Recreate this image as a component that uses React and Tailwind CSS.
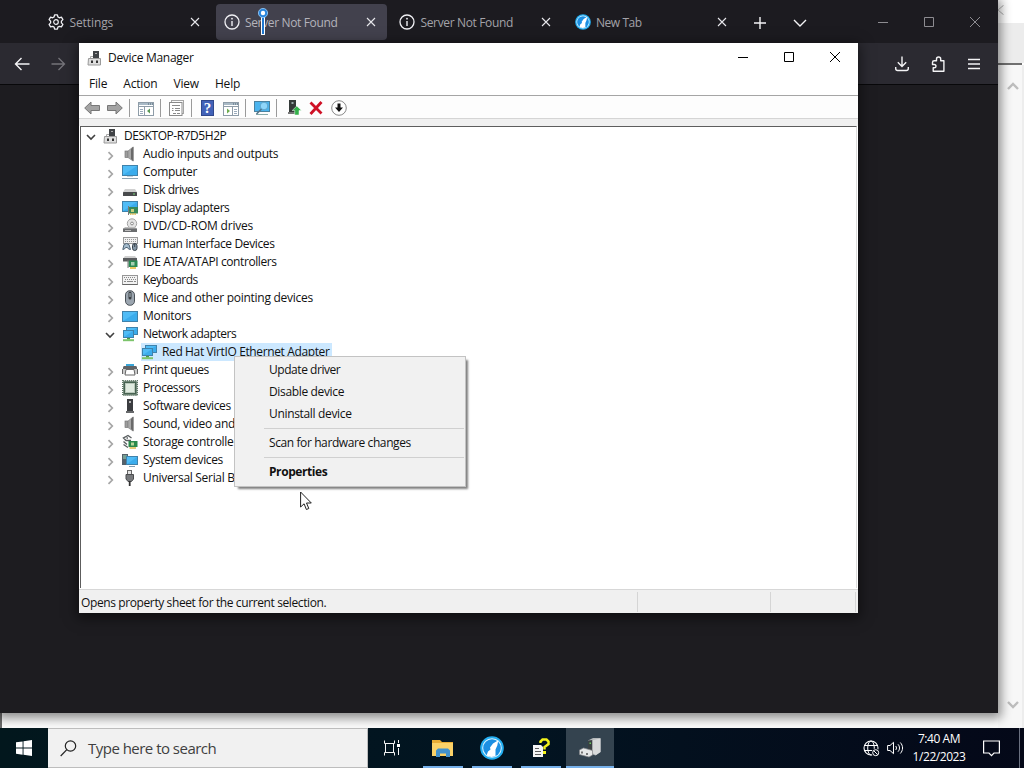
import React from "react";

const Svg = ({ w = 16, h = 16, vb, className = "", children }) => (
  <svg width={w} height={h} viewBox={vb || `0 0 ${w} ${h}`} fill="none" className={`shrink-0 ${className}`}>
    {children}
  </svg>
);

/* ---------- shared glyphs ---------- */
const Close = ({ className = "" }) => (
  <Svg w={10} h={10} className={className}>
    <path d="M1 1L9 9M9 1L1 9" stroke="currentColor" strokeWidth="1.1" />
  </Svg>
);
const Info = () => (
  <Svg w={16} h={16}>
    <circle cx="8" cy="8" r="7" stroke="#f0f0f4" strokeWidth="1.3" />
    <path d="M8 7V12" stroke="#f0f0f4" strokeWidth="1.4" />
    <circle cx="8" cy="4.7" r=".9" fill="#f0f0f4" />
  </Svg>
);
const Gear = () => (
  <Svg w={16} h={16}>
    <path
      d="M6.6 .9h2.8l.5 2 1.5.9 2-.7 1.5 2.5-1.5 1.5v1.8l1.5 1.5-1.5 2.5-2-.6-1.5.8-.5 2H6.6l-.5-2-1.5-.8-2 .6-1.5-2.5 1.5-1.5V7.1L1.1 5.6l1.5-2.5 2 .7 1.5-.9z"
      stroke="#f0f0f4"
      strokeWidth="1.3"
      strokeLinejoin="round"
    />
    <circle cx="8" cy="8" r="2.3" stroke="#f0f0f4" strokeWidth="1.2" />
  </Svg>
);
const Wolf = ({ size = 16 }) => (
  <Svg w={size} h={size} vb="0 0 24 24">
    <circle cx="12" cy="12" r="11.8" fill="#22aef2" />
    <circle cx="12" cy="12" r="9.8" fill="#d9f3ff" />
    <circle cx="12" cy="12" r="8.8" fill="#1c8fe2" />
    <path d="M18.300 4.300L17.300 9.500 15.500 13.500 15.500 20 11.500 21 6.500 19.500 8 15.500 10.500 13.500 10 11.500 13 7.500z" fill="#fff" />
  </Svg>
);

/* ---------- device icons ---------- */
const Screen = ({ x = 0, y = 2, w = 16, h = 10 }) => (
  <>
    <rect x={x + 0.5} y={y + 0.5} width={w - 1} height={h - 1} fill="#50bcf6" stroke="#3f82ab" />
    <path d={`M${x + 1} ${y + h - 1}L${x + w - 1} ${y + 1}V${y + h - 1}z`} fill="#2a9ee4" opacity=".55" />
  </>
);
const PcIcon = () => (
  <Svg>
    <rect x="6" y="1" width="6" height="8" fill="#404346" />
    <rect x="8" y="3" width="2" height="1" fill="#aaa" />
    <path d="M3.500 9V6.500h2.500" stroke="#aaa" />
    <path d="M1.500 8.500h12V15H1z" fill="#dedede" stroke="#9a9a9a" />
    <rect x="4" y="10.500" width="2" height="2.500" fill="#333" />
    <rect x="9" y="10.500" width="2" height="2.500" fill="#333" />
  </Svg>
);
const Speaker = () => (
  <Svg>
    <rect x="3" y="5" width="3" height="6.5" fill="#9d9d9d" stroke="#777" strokeWidth=".7" />
    <path d="M6 5L11 1V15L6 11.500z" fill="#a8a8a8" stroke="#888" strokeWidth=".7" />
    <path d="M9 3L11.500 .5V15.500L9 13z" fill="#6a6a6a" />
  </Svg>
);
const Computer = () => (
  <Svg>
    <Screen y={1} h={11} />
    <path d="M0 14.500H16" stroke="#8ea4b3" />
    <path d="M5 12.500H11" stroke="#c4d3dc" />
  </Svg>
);
const Disk = () => (
  <Svg>
    <path d="M3 7h10l2 3H1z" fill="#d0d0d0" />
    <rect x="1" y="10" width="14" height="4" rx=".5" fill="#484a4c" />
    <rect x="11" y="11.5" width="2" height="1" fill="#7bd67b" />
  </Svg>
);
const Display = () => (
  <Svg>
    <Screen y={1} h={11} />
    <rect x="7" y="7" width="9" height="6.5" fill="#38895a" />
    <rect x="9" y="9" width="3" height="3" fill="#c7cf7d" />
    <path d="M8 14H14" stroke="#d4b13c" strokeWidth="1.4" strokeDasharray="1.5 .7" />
    <path d="M6.500 6V15" stroke="#7a7a7a" />
  </Svg>
);
const Dvd = () => (
  <Svg>
    <circle cx="10" cy="5.5" r="4.7" fill="#e4e4e4" stroke="#a3a3a3" />
    <circle cx="10" cy="5.5" r="1.4" fill="#fff" stroke="#8b8b8b" />
    <path d="M3 9h10l2 2H1z" fill="#bcbcbc" />
    <rect x="1" y="10.5" width="14" height="3.5" fill="#6a6c6e" />
    <rect x="3" y="12" width="6" height="1" fill="#bbb" />
  </Svg>
);
const Hid = () => (
  <Svg>
    <rect x="1.5" y="1.5" width="14" height="6" fill="#f0f0f0" stroke="#9a9a9a" />
    <path d="M3 3.500H15M3 5.500H15" stroke="#999" strokeDasharray="1 1" />
    <path d="M.8 13.500L2 8.500 4.500 7.500 7 8.500 8.500 13.500 6.500 13 5.500 11.500H3.500L2.500 13z" stroke="#4d6274" fill="#a5bccd" />
    <rect x="10.5" y="7.5" width="4.5" height="7" rx="2.2" fill="#8496a5" stroke="#39434c" />
    <path d="M12.700 7.500V11" stroke="#39434c" />
  </Svg>
);
const Ide = () => (
  <Svg>
    <path d="M3 2h10l2 2.500H1z" fill="#cfcfcf" />
    <rect x="1" y="4" width="14" height="3.5" fill="#5a5c5e" />
    <rect x="6.5" y="6.5" width="9" height="6.5" fill="#2b8a55" />
    <rect x="9" y="8" width="3.5" height="3.5" fill="#a6d0b2" />
    <path d="M8 14H14" stroke="#e1b93a" strokeWidth="1.6" />
    <path d="M6 6V14" stroke="#777" />
  </Svg>
);
const Keyboard = () => (
  <Svg>
    <rect x=".5" y="3.5" width="15" height="9" fill="#f2f2f2" stroke="#979797" />
    <path d="M2 5.500H14M3 7.500H14" stroke="#888" strokeDasharray="1 1" />
    <path d="M2 9.500H4M5 9.500H11M12 9.500H14" stroke="#888" />
    <path d="M.5 12.500H15.500" stroke="#666" />
  </Svg>
);
const Mouse = () => (
  <Svg>
    <rect x="3.5" y=".7" width="9" height="14.6" rx="4.2" fill="#9ba5af" stroke="#4a5157" />
    <rect x="6.5" y="1.5" width="3" height="8" rx="1.5" fill="#383e43" />
    <rect x="7.5" y="3" width="1" height="4" fill="#b5c3cd" />
  </Svg>
);
const Monitor = () => (
  <Svg>
    <Screen y={3} h={11} />
  </Svg>
);
const Network = () => (
  <Svg>
    <Screen x={4} y={1} w={12} h={8} />
    <Screen x={1} y={4} w={11} h={8} />
    <path d="M6.500 12V13.500" stroke="#4a9c44" strokeWidth="3" />
    <path d="M1 14.200H12" stroke="#7cc46b" strokeWidth="2" />
  </Svg>
);
const Printer = () => (
  <Svg>
    <rect x="4" y="2" width="8" height="3" fill="#3aa6d8" />
    <path d="M1 5.500C1 4 2 4 3 4h10c1 0 2 0 2 1.500V8H1z" fill="#606366" />
    <rect x="0" y="7" width="16" height="5" fill="#cacaca" />
    <path d="M4 7.500H12L13 13H3z" fill="#fff" stroke="#666" />
    <path d="M.5 7V12M15.500 7V12" stroke="#666" />
  </Svg>
);
const Cpu = () => (
  <Svg>
    <rect x=".7" y=".7" width="14.6" height="14.6" stroke="#5f7866" strokeWidth="1.4" strokeDasharray="1.2 .8" />
    <rect x="1.3" y="1.3" width="13.4" height="13.4" fill="#476351" />
    <rect x="3.5" y="3.5" width="9" height="9" fill="#e0ebe0" stroke="#b9c8bb" />
  </Svg>
);
const Software = () => (
  <Svg>
    <rect x="5" y="1" width="6" height="13" fill="#3b3d40" />
    <rect x="7" y="3" width="2" height="2" fill="#b5b5b5" />
    <rect x="4" y="13" width="8" height="2" fill="#67696b" />
  </Svg>
);
const Storage = () => (
  <Svg>
    <path d="M9.500 4L6 1.500 1.500 4 4 6.500H9M1.500 7.500L5 10.500M1.500 10.500L6 13.500M6 4H4.500" stroke="#5a5f61" strokeWidth="1.400" />
    <rect x="6.5" y="7" width="9" height="6" fill="#2b8a4c" />
    <rect x="9" y="8.5" width="3" height="3" fill="#b8d69a" />
    <path d="M7.500 14H14" stroke="#d7b33c" strokeWidth="1.400" />
  </Svg>
);
const System = () => (
  <Svg>
    <path d="M0 2h6v11H0z" fill="#54616b" />
    <path d="M1 4H5M1 6H4" stroke="#9db" />
    <Screen x={4} y={4} w={12} h={9} />
    <path d="M7 14.500H13" stroke="#7f9cb0" />
  </Svg>
);
const Usb = () => (
  <Svg>
    <rect x="5.5" y=".5" width="4" height="4" fill="#e3e3e3" stroke="#666" />
    <path d="M4 4.500h7.500V9L9.500 11.500H6L4 9z" fill="#77797c" stroke="#4b4d4f" />
    <path d="M7.700 11V16" stroke="#333" strokeWidth="1.800" />
  </Svg>
);

const rows = [
  ["Audio inputs and outputs", Speaker, "tracking-[-0.28px]"],
  ["Computer", Computer, "tracking-[-0.3px]"],
  ["Disk drives", Disk, "tracking-[-0.45px]"],
  ["Display adapters", Display, "tracking-[-0.43px]"],
  ["DVD/CD-ROM drives", Dvd, "tracking-[-0.2px]"],
  ["Human Interface Devices", Hid, "tracking-[-0.37px]"],
  ["IDE ATA/ATAPI controllers", Ide, "tracking-[-0.4px]"],
  ["Keyboards", Keyboard, "tracking-[-0.5px]"],
  ["Mice and other pointing devices", Mouse, "tracking-[-0.26px]"],
  ["Monitors", Monitor, "tracking-[-0.3px]"],
  ["Network adapters", Network, "tracking-[-0.46px]", true],
  ["Print queues", Printer, "tracking-[-0.45px]"],
  ["Processors", Cpu, "tracking-[-0.4px]"],
  ["Software devices", Software, "tracking-[-0.4px]"],
  ["Sound, video and", Speaker, "tracking-[-0.3px]"],
  ["Storage controlle", Storage, "tracking-[-0.3px]"],
  ["System devices", System, "tracking-[-0.35px]"],
  ["Universal Serial B", Usb, "tracking-[-0.3px]"],
];

const Twisty = ({ open }) =>
  open ? (
    <Svg w={10} h={10} className="mt-px">
      <path d="M1 3L5 7L9 3" stroke="#404040" strokeWidth="1.600" />
    </Svg>
  ) : (
    <Svg w={10} h={10} className="mt-[3px]">
      <path d="M3.500 1.200L7.300 5L3.500 8.800" stroke="#a6a6a6" strokeWidth="1.700" />
    </Svg>
  );

const Tab = ({ icon, label, active, track }) => (
  <div
    className={`flex h-9 w-[171px] shrink-0 items-center rounded pl-2 pr-[11px] ${
      active ? "bg-[#42414d] text-[#b4b3bb]" : "text-[#a3a2a8]"
    }`}
  >
    {icon}
    <span className={`ml-[5.5px] flex-1 whitespace-nowrap pt-px text-[12px] ${track}`}>{label}</span>
    <Close className="text-[#e8e8ec]" />
  </div>
);

const WinControls = ({ className = "" }) => (
  <div className={`flex items-center ${className}`}>
    <div className="flex w-[46px] justify-center">
      <Svg w={10} h={10}><path d="M0 5.500H10" stroke="currentColor" /></Svg>
    </div>
    <div className="flex w-[46px] justify-center">
      <Svg w={10} h={10}><path d="M.5 .5H9.500V9.500H.5z" stroke="currentColor" /></Svg>
    </div>
    <div className="flex w-[46px] justify-center">
      <Svg w={10} h={10}><path d="M0 0L10 10M10 0L0 10" stroke="currentColor" /></Svg>
    </div>
  </div>
);

const Browser = () => (
  <div className="absolute left-0 top-0 flex h-[713px] w-[998px] flex-col bg-[#1d1c20] shadow-[0_2px_10px_3px_rgba(0,0,0,0.45)]">
    <div className="flex h-[43px] items-center gap-[4.5px] bg-[#1c1b20] pl-10 pt-px">
      <Tab icon={<Gear />} label="Settings" track="tracking-[-0.1px]" />
      <Tab icon={<Info />} label="Server Not Found" active track="tracking-[-0.35px]" />
      <Tab icon={<Info />} label="Server Not Found" track="tracking-[-0.35px]" />
      <Tab icon={<Wolf />} label="New Tab" track="tracking-[-0.45px]" />
      <div className="ml-[12px] flex flex-1 items-center gap-[27px] pt-px text-[#f4f4f6]">
        <Svg w={12} h={12}><path d="M6 0V12M0 6H12" stroke="currentColor" strokeWidth="1.400" /></Svg>
        <Svg w={14} h={12}><path d="M1 3L7 9L13 3" stroke="currentColor" strokeWidth="1.400" /></Svg>
      </div>
      <WinControls className="text-[#8d8c91]" />
    </div>
    <div className="flex h-[41px] items-center bg-[#2b2a31] pl-[14px] pr-4 text-[#f4f4f6]">
      <Svg w={16} h={14}><path d="M15.500 7H1.500M7.500 1L1.500 7l6 6" stroke="currentColor" strokeWidth="1.400" /></Svg>
      <Svg w={16} h={14} className="ml-[21px] text-[#75747a]"><path d="M.5 7H13.500M7.500 1l6 6-6 6" stroke="currentColor" strokeWidth="1.300" /></Svg>
      <div className="ml-auto flex items-center gap-5">
        <Svg w={16} h={16}>
          <path d="M8 .5V10M3.800 6.300L8 10.500l4.200-4.200M1.700 11v1.500c0 1.200.7 2 2 2h8.600c1.300 0 2-.8 2-2V11" stroke="currentColor" strokeWidth="1.400" />
        </Svg>
        <Svg w={16} h={16}>
          <path d="M4.200 4.800h2.300V3.200c0-2.900 4.200-2.900 4.200 0v1.600h3.200V15.300H3.200v-3.500h1c2.400 0 2.400-3.300 0-3.300H2.500V6.500c0-1.100.6-1.700 1.700-1.700z" stroke="currentColor" strokeWidth="1.400" strokeLinejoin="round" />
        </Svg>
        <Svg w={16} h={14}><path d="M2 2.500H14M2 7H14M2 11.500H14" stroke="currentColor" strokeWidth="1.400" /></Svg>
      </div>
    </div>
    <div className="h-px bg-[#08080a]" />
  </div>
);

const Pin = () => (
  <Svg w={12} h={28} className="absolute left-[257px] top-[7px]">
    <rect x="4.5" y="9" width="3" height="18.5" fill="#1f78d1" stroke="#fff" />
    <circle cx="6" cy="6" r="4.6" fill="#2a86dc" stroke="#9cd2ff" strokeWidth=".8" />
    <circle cx="6" cy="6" r="2.2" fill="#fff" />
  </Svg>
);

const Panel = ({ dir }) => (
  <Svg w={16} h={14}>
    <rect x=".5" y=".5" width="15" height="13" fill="#fff" stroke="#8e9ca8" />
    <path d="M1 2H15" stroke="#a9bac6" strokeWidth="2" />
    <path d="M10 2H15" stroke="#4d6373" strokeDasharray="1 1" />
    <path d="M1 4.500H15" stroke="#8e9ca8" />
    {dir === "l" ? (
      <>
        <path d="M6.500 5V13" stroke="#8e9ca8" />
        <path d="M2 7.500H5M2 9.500H5M2 11.500H5" stroke="#9ab" />
        <path d="M12 6.500V11.500L9 9z" fill="#5c9a56" />
      </>
    ) : (
      <>
        <path d="M9.500 5V13" stroke="#8e9ca8" />
        <path d="M11 7.500H14M11 9.500H14M11 11.500H14" stroke="#9ab" />
        <path d="M4 6.500V11.500L7 9z" fill="#6fae50" />
      </>
    )}
  </Svg>
);

const Sep = ({ className }) => <div className={`h-[18px] w-px shrink-0 bg-[#9a9a9a] ${className}`} />;

const Toolbar = () => (
  <div className="flex h-[22px] items-center bg-[#fdfdfd] pl-[5px] pt-[2px]">
    <Svg w={16} h={14}><path d="M.7 7L7 1v3.500h8.500v5H7V13z" fill="#a3a3a3" stroke="#777" /></Svg>
    <Svg w={16} h={14} className="ml-[7px]"><path d="M15.300 7L9 1v3.500H.5v5H9V13z" fill="#a3a3a3" stroke="#777" /></Svg>
    <Sep className="ml-[6px]" />
    <div className="ml-2 pt-[2px]"><Panel dir="l" /></div>
    <Sep className="ml-[6px]" />
    <Svg w={16} h={16} className="ml-2">
      <rect x="2.5" y=".5" width="12" height="13" fill="#fafafa" stroke="#a5a5a5" />
      <rect x=".5" y="2.5" width="12.5" height="13" fill="#fff" stroke="#8a8a8a" />
      <path d="M3 5.500H11M6 8.500H11M6 10.500H11M3 8.500H4.500M3 10.500H4.500M4 13.500H7M8 13.500H11" stroke="#8a8a8a" />
    </Svg>
    <Sep className="ml-[6px]" />
    <div className="ml-[9px] flex h-4 w-[13px] items-center justify-center border border-[#31488c] bg-[#4262b8] font-['Liberation_Serif',serif] text-[15px] font-bold leading-none text-white">?</div>
    <div className="ml-[9px] pt-[2px]"><Panel dir="r" /></div>
    <Sep className="ml-[6px]" />
    <Svg w={17} h={16} className="ml-[8px]">
      <rect x=".5" y="1.5" width="15" height="10" fill="#4bb4ee" stroke="#4a819f" />
      <path d="M2 14.500H14" stroke="#8aa" />
      <circle cx="10" cy="6" r="3.8" fill="#8fd6fa" stroke="#5b9cc0" strokeWidth=".8" />
      <path d="M7.500 9L2.500 14" stroke="#55758a" strokeWidth="1.600" />
    </Svg>
    <Sep className="ml-[5px]" />
    <Svg w={14} h={16} className="ml-[11px]">
      <rect x="1" y="0" width="7" height="12" fill="#343a38" />
      <rect x="3.5" y="2" width="2" height="2" fill="#9aa" />
      <path d="M0 12h8v2H0z" fill="#777" />
      <path d="M8.800 6l4.700 4.500h-2.500V15H6.700v-4.500H4.200z" fill="#33b04a" stroke="#fff" strokeWidth=".5" />
    </Svg>
    <Svg w={14} h={14} className="ml-[7px]"><path d="M1.500 1.500L12.500 12.500M12.500 1L1.500 13" stroke="#cf1126" strokeWidth="2.800" /></Svg>
    <Svg w={16} h={16} className="ml-2">
      <circle cx="8" cy="8" r="7.3" fill="#fff" stroke="#888" />
      <path d="M6.500 3.500h3v4h2.500L8 12 4 7.500h2.500z" fill="#111" />
    </Svg>
  </div>
);

const DeviceManager = () => (
  <div className="absolute left-[79px] top-[43px] flex h-[570px] w-[779px] flex-col bg-white text-[12px] tracking-[-0.2px] text-[#111] shadow-[0_3px_12px_2px_rgba(0,0,0,0.5)]">
    <div className="flex h-[29px] items-center pl-2">
      <PcIcon />
      <span className="ml-[5px] flex-1 pt-px tracking-[-0.3px]">Device Manager</span>
      <WinControls className="pb-px text-black" />
    </div>
    <div className="flex h-[23px] items-center gap-[16px] pl-[10px] pt-px tracking-[-0.18px]">
      <span>File</span>
      <span>Action</span>
      <span>View</span>
      <span>Help</span>
    </div>
    <div className="h-px bg-[#a5a5a5]" />
    <Toolbar />
    <div className="h-[8px] border-t border-[#d5d5d5] bg-[#f0f0f0]" />
    <div className="ml-px mr-[1px] flex h-[462px] flex-col overflow-hidden border-l border-r border-t border-[#5d5d5d] border-r-[#dcdcdc] bg-white">
      <div className="flex h-[18px] shrink-0 items-center pl-[5px]">
        <Twisty open />
        <span className="w-[7px]" />
        <PcIcon />
        <span className="ml-[5px] tracking-[-0.45px]">DESKTOP-R7D5H2P</span>
      </div>
      {rows.map(([label, Icon, track, open]) => (
        <React.Fragment key={label}>
          <div className="flex h-[18px] shrink-0 items-center whitespace-nowrap pl-[24px]">
            <Twisty open={open} />
            <span className="w-[7px]" />
            <Icon />
            <span className={`ml-[5px] ${track}`}>{label}</span>
          </div>
          {open && (
            <div className="flex h-[18px] shrink-0 items-center pl-[60px]">
              <div className="flex h-[18px] w-[191px] items-center bg-[#cce8ff]">
                <Network />
                <span className="ml-[5px] whitespace-nowrap tracking-[-0.37px]">Red Hat VirtIO Ethernet Adapter</span>
              </div>
            </div>
          )}
        </React.Fragment>
      ))}
    </div>
    <div className="h-px bg-white" />
    <div className="flex flex-1 items-center border-t border-[#d7d7d7] bg-[#f0f0f0]">
      <span className="w-[558px] pl-[2px] pt-[3px] tracking-[-0.39px]">Opens property sheet for the current selection.</span>
      <div className="h-5 w-[133px] border-l border-[#d5d5d5]" />
      <div className="h-5 w-[86px] border-l border-r border-[#d5d5d5]" />
    </div>
  </div>
);

const MenuItem = ({ children, className = "" }) => (
  <div className={`flex h-[22px] items-center pl-[33px] ${className}`}>{children}</div>
);
const MenuSep = () => <div className="my-[3px] ml-[28px] mr-px h-px bg-[#d0d0d0]" />;

const ContextMenu = () => (
  <div className="absolute left-[234px] top-[356px] h-[131px] w-[232px] border border-[#c3c3c3] bg-[#f1f1f1] pl-px pt-[2px] text-[12px] text-[#111] shadow-[3px_3px_2px_-1px_rgba(0,0,0,0.5)]">
    <MenuItem className="tracking-[-0.45px]">Update driver</MenuItem>
    <MenuItem className="tracking-[-0.35px]">Disable device</MenuItem>
    <MenuItem className="tracking-[-0.33px]">Uninstall device</MenuItem>
    <MenuSep />
    <MenuItem className="tracking-[-0.4px]">Scan for hardware changes</MenuItem>
    <MenuSep />
    <MenuItem className="font-bold tracking-[-0.42px]">Properties</MenuItem>
  </div>
);

const TaskButton = ({ children, active }) => (
  <div
    className={`flex h-10 w-12 shrink-0 items-center justify-center ${active ? "bg-[#34434f]" : ""}`}
  >
    <div className={`flex h-10 items-center justify-center border-b-2 border-[#76b0ea] pt-[2px] ${active ? "w-12" : "w-10"}`}>
      {children}
    </div>
  </div>
);

const Taskbar = () => (
  <div className="absolute bottom-0 left-0 flex h-10 w-[1024px] items-center bg-linear-to-r from-[#02171d] via-[#021421] to-[#040818] text-white">
    <div className="flex w-12 justify-center">
      <Svg w={16} h={16}>
        <path d="M0 2.300L6.600 1.400V7.600H0zM7.500 1.300L16 0V7.600H7.500zM0 8.500H6.600V14.700L0 13.800zM7.500 8.500H16V16L7.500 14.800z" fill="#fff" />
      </Svg>
    </div>
    <div className="flex h-10 w-[320px] items-center border border-l-0 border-[#bdbdbd] bg-[#f1f1f1] pl-3 text-[#3f3f3f]">
      <Svg w={17} h={17}>
        <circle cx="10.5" cy="6" r="5.2" stroke="#222" strokeWidth="1.2" />
        <path d="M6.800 9.700L.7 16" stroke="#222" strokeWidth="1.200" />
      </Svg>
      <span className="ml-[11px] text-[15px] tracking-[-0.52px]">Type here to search</span>
    </div>
    <div className="flex w-12 justify-center">
      <Svg w={16} h={16}>
        <path d="M.5 .5V3.500H10.500V.5M.5 15.500V12.500H10.500V15.500M1.500 3.500V12.500M9.500 3.500V12.500M14.500 0V3M14.500 8V15" stroke="#f4f4f4" />
        <rect x="13" y="4" width="3" height="3" fill="#fff" />
      </Svg>
    </div>
    <div className="flex items-center pl-[3px]">
      <TaskButton>
        <Svg w={22} h={20}>
          <path d="M0 2h8l2 2h11V18H0z" fill="#e9ad35" />
          <path d="M0 5h21v13H0z" fill="#fbd268" />
          <path d="M4 19v-6.500l2-2h10l2 2V19h-4v-3.500H8V19z" fill="#4292ce" />
        </Svg>
      </TaskButton>
      <span className="w-px" />
      <TaskButton><Wolf size={24} /></TaskButton>
      <span className="w-px" />
      <TaskButton>
        <Svg w={18} h={20}>
          <path d="M1 7h8l2 2v10H1z" fill="#f5f5f5" />
          <path d="M3 10.500H7M3 13.500H9M3 16.500H9" stroke="#5c5c5c" />
          <path d="M8.500 5V3.500L10.500 1.500h4l2 2V6l-4 3v2.500" stroke="#f3f31b" strokeWidth="2.500" />
          <rect x="11" y="13" width="3" height="3" fill="#f3f31b" />
        </Svg>
      </TaskButton>
      <div className="ml-[1px]">
        <TaskButton active>
          <Svg w={22} h={20}>
            <path d="M9 2.500L14 0h7.500V14l-5 3.500-7.500-3z" fill="#b5b8ba" />
            <path d="M9 2.500L13.500 2v11.500L9 12z" fill="#3a4143" />
            <path d="M13.500 2L21.500 .5V14l-4.500 3-3.500-2z" fill="#d8dadb" />
            <path d="M.500 12l4-2 9 2.500v4.500l-3.500 2-9.500-2.500z" fill="#e7e8e8" stroke="#85878a" strokeWidth=".7" />
            <path d="M3 13.500V15.500M8 15V17" stroke="#444" strokeWidth="1.400" />
            <rect x="10.5" y="4.5" width="1.5" height="1.5" fill="#65c65b" />
          </Svg>
        </TaskButton>
      </div>
    </div>
    <div className="ml-auto flex h-10 items-center">
      <Svg w={17} h={17}>
        <circle cx="8" cy="8" r="7" stroke="#fff" strokeWidth="1.1" />
        <ellipse cx="8" cy="8" rx="3.3" ry="7" stroke="#fff" />
        <path d="M1 5.500H15M1 10.500H10" stroke="#fff" />
        <circle cx="12.7" cy="12.7" r="4.3" fill="#050c1a" />
        <circle cx="12.7" cy="12.7" r="3" stroke="#fff" />
        <path d="M10.700 10.700l4 4" stroke="#fff" />
      </Svg>
      <Svg w={17} h={14} className="ml-[7px]">
        <path d="M.6 4.500H3L6.500 1.300V12.700L3 9.500H.6z" stroke="#fff" />
        <path d="M8.700 5c1 1.200 1 2.800 0 4M11 3.300c2 2.200 2 5.200 0 7.400M13.300 1.500c3 3.300 3 7.700 0 11" stroke="#fff" />
      </Svg>
      <div className="ml-[7px] flex w-[56px] flex-col items-center whitespace-nowrap text-[12px] leading-[18px] tracking-[-0.45px]">
        <span>7:40 AM</span>
        <span>1/22/2023</span>
      </div>
      <Svg w={17} h={17} className="ml-[16px] mt-px">
        <path d="M.6 1H16.400V13H11L8.500 15.700 6 13H.6z" stroke="#fff" strokeWidth="1.200" />
      </Svg>
      <div className="ml-[19px] h-10 w-[5px] border-l border-[#6a7080]" />
    </div>
  </div>
);

const BackWindow = () => (
  <div className="absolute left-0 top-0 flex h-[728px] w-[1024px] justify-end border-l-2 border-[#6a6a6a] bg-[#fbfbfb]">
    <div className="flex w-[26px] flex-col items-center">
      <div className="h-[23px] w-full bg-white" />
      <div className="h-10 w-full bg-[#ececec]" />
      <div className="h-[2px] w-full border-r-2 border-white bg-[#707070]" />
      <div className="flex w-full flex-1 flex-col items-center justify-between border-r-2 border-[#ededed] bg-[#f7f7f7] pb-[18px] pl-[6px] pt-[15px]">
        <Svg w={12} h={12}><path d="M1 9L6 4L11 9" stroke="#bdbdbd" strokeWidth="2.400" /></Svg>
        <Svg w={12} h={12}><path d="M1 4L6 9L11 4" stroke="#bdbdbd" strokeWidth="2.400" /></Svg>
      </div>
    </div>
  </div>
);

export default function App() {
  return (
    <div className="relative h-[768px] w-[1024px] overflow-hidden bg-white font-['Open_Sans','Noto_Sans',sans-serif]">
      <BackWindow />
      <Browser />
      <Svg w={6} h={10} className="absolute left-[998px] top-[5px]"><path d="M0 5L5.500 .3M0 5L5.500 9.700" stroke="#8a8a8a" /></Svg>
      <Pin />
      <DeviceManager />
      <ContextMenu />
      <Svg w={13} h={20} className="absolute left-[300px] top-[491px]">
        <path d="M.6 1V16l3.500-3.200L6.400 18.500l2.400-1L6.500 12h4.800z" fill="#fff" stroke="#222" />
      </Svg>
      <Taskbar />
    </div>
  );
}
